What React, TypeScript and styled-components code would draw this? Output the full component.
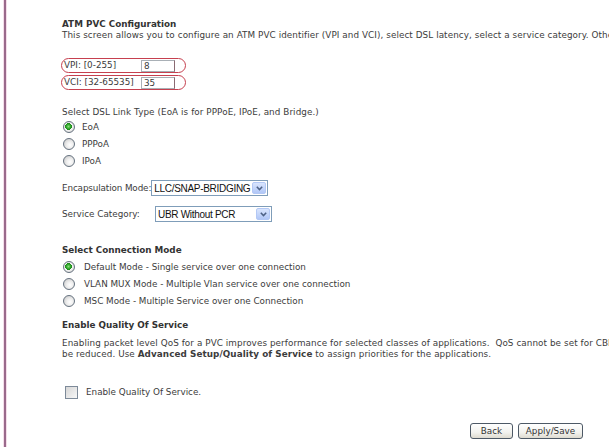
import styled, { createGlobalStyle } from "styled-components";

const GlobalStyle = createGlobalStyle`
  html, body {
    margin: 0;
    padding: 0;
    background: #fff;
    overflow: hidden;
  }
  body {
    font-family: "DejaVu Sans", Verdana, sans-serif;
    font-size: 8.8px;
    color: #3c3c3c;
  }
`;

const Page = styled.div`
  display: flex;
  width: 609px;
  height: 447px;
  overflow: hidden;
`;

const FrameEdge = styled.div`
  flex: none;
  margin-left: 3px;
  width: 4px;
  background: linear-gradient(
    to right,
    #f4dde9 0 1px,
    #9a6a8c 1px 3px,
    #f4dde9 3px
  );
`;

const Content = styled.div`
  padding: 19px 0 0 55px;
  white-space: nowrap;
  line-height: 11px;
`;

const Title = styled.div<{ $top?: number }>`
  font-weight: bold;
  color: #333;
  margin-top: ${(p) => p.$top ?? 0}px;
`;

const Text = styled.div<{ $top?: number }>`
  margin-top: ${(p) => p.$top ?? 0}px;
  letter-spacing: 0.08px;
`;

const FieldOval = styled.div<{ $top?: number }>`
  display: flex;
  align-items: center;
  width: 123px;
  height: 13px;
  margin-top: ${(p) => p.$top ?? 0}px;
  margin-left: -1px;
  border: 1px solid #c6404f;
  border-radius: 8px;
`;

const FieldLabel = styled.span`
  width: 77px;
  padding-left: 2px;
`;

const TextInput = styled.span`
  box-sizing: border-box;
  width: 34px;
  height: 12px;
  padding-left: 2px;
  border: 1px solid #a9b0b6;
  border-right-color: #8a6a72;
  line-height: 10px;
`;

const RadioList = styled.div<{ $top?: number; $gap: number }>`
  display: flex;
  flex-direction: column;
  margin-top: ${(p) => p.$top ?? 0}px;
  gap: ${(p) => p.$gap}px;
`;

const OptionRow = styled.div<{ $labelGap: number }>`
  display: flex;
  align-items: center;
  gap: ${(p) => p.$labelGap}px;
  padding-left: 1px;
`;

const Radio = styled.span<{ $checked?: boolean }>`
  box-sizing: border-box;
  width: 12px;
  height: 12px;
  border-radius: 50%;
  border: 1px solid #66727f;
  background: ${(p) =>
    p.$checked
      ? "radial-gradient(circle at 45% 45%, #8be07a 0, #2fa52a 2.2px, #1e8a1c 3.2px, #f4f4f4 3.6px, #dcdcdc 6px)"
      : "radial-gradient(circle at 60% 60%, #ffffff 0, #f0f0f0 3px, #d6d6d6 6px)"};
`;

const SelectRow = styled.div<{ $top?: number }>`
  display: flex;
  align-items: center;
  margin-top: ${(p) => p.$top ?? 0}px;
`;

const SelectLabel = styled.span<{ $width?: number; $squeeze?: boolean }>`
  width: ${(p) => (p.$width ? `${p.$width}px` : "auto")};
  letter-spacing: ${(p) => (p.$squeeze ? "-0.12px" : "normal")};
`;

const SelectBox = styled.div<{ $width: number }>`
  box-sizing: border-box;
  display: flex;
  align-items: center;
  justify-content: space-between;
  width: ${(p) => p.$width}px;
  height: 16px;
  padding: 0 1px 0 2px;
  border: 1px solid #7f9db9;
  background: #fff;
  font-family: "Liberation Sans", Arial, sans-serif;
  font-size: 10px;
  letter-spacing: -0.3px;
  color: #111;
`;

const ArrowButton = styled.span`
  box-sizing: border-box;
  display: flex;
  align-items: center;
  justify-content: center;
  width: 14px;
  height: 12px;
  border: 1px solid #b3c8f5;
  border-radius: 2px;
  background: linear-gradient(#d9e5fd, #b1c7f7);
`;

const CheckRow = styled.div<{ $top?: number }>`
  display: flex;
  align-items: center;
  gap: 8px;
  margin-top: ${(p) => p.$top ?? 0}px;
  padding-left: 3px;
`;

const CheckBox = styled.span`
  box-sizing: border-box;
  width: 13px;
  height: 13px;
  border: 1px solid #7d8a99;
  background: linear-gradient(135deg, #d6d6d6, #f7f7f7);
`;

const ButtonRow = styled.div<{ $top?: number }>`
  display: flex;
  gap: 5px;
  margin-top: ${(p) => p.$top ?? 0}px;
  padding-left: 408px;
`;

const Button = styled.button<{ $width: number }>`
  box-sizing: border-box;
  width: ${(p) => p.$width}px;
  height: 16px;
  padding: 0;
  border: 1px solid #4d5966;
  border-radius: 3px;
  background: linear-gradient(#ffffff, #f2f2ee 60%, #dedbd0);
  font-family: "DejaVu Sans", Verdana, sans-serif;
  font-size: 8.8px;
  color: #333;
`;

function Chevron() {
  return (
    <svg width="7" height="5" viewBox="0 0 7 5">
      <path d="M0.8 0.8 L3.5 3.6 L6.2 0.8" fill="none" stroke="#4d6185" strokeWidth="1.5" />
    </svg>
  );
}

const linkTypes = [
  { label: "EoA", checked: true },
  { label: "PPPoA", checked: false },
  { label: "IPoA", checked: false },
];

const connectionModes = [
  { label: "Default Mode - Single service over one connection", checked: true },
  { label: "VLAN MUX Mode - Multiple Vlan service over one connection", checked: false },
  { label: "MSC Mode - Multiple Service over one Connection", checked: false },
];

export default function App() {
  return (
    <>
      <GlobalStyle />
      <Page>
        <FrameEdge />
        <Content>
          <Title>ATM PVC Configuration</Title>
          <Text>
            This screen allows you to configure an ATM PVC identifier (VPI and VCI), select DSL
            latency, select a service category. Otherwise choose an existing interface by
            selecting the checkbox to enable it.
          </Text>

          <FieldOval $top={17}>
            <FieldLabel>VPI: [0-255]</FieldLabel>
            <TextInput>8</TextInput>
          </FieldOval>
          <FieldOval $top={2}>
            <FieldLabel>VCI: [32-65535]</FieldLabel>
            <TextInput>35</TextInput>
          </FieldOval>

          <Text $top={17}>Select DSL Link Type (EoA is for PPPoE, IPoE, and Bridge.)</Text>
          <RadioList $top={3} $gap={5}>
            {linkTypes.map((t) => (
              <OptionRow key={t.label} $labelGap={7}>
                <Radio $checked={t.checked} />
                <span>{t.label}</span>
              </OptionRow>
            ))}
          </RadioList>

          <SelectRow $top={13}>
            <SelectLabel $squeeze>Encapsulation Mode:</SelectLabel>
            <SelectBox $width={117}>
              <span>LLC/SNAP-BRIDGING</span>
              <ArrowButton>
                <Chevron />
              </ArrowButton>
            </SelectBox>
          </SelectRow>
          <SelectRow $top={10}>
            <SelectLabel $width={93}>Service Category:</SelectLabel>
            <SelectBox $width={117}>
              <span>UBR Without PCR</span>
              <ArrowButton>
                <Chevron />
              </ArrowButton>
            </SelectBox>
          </SelectRow>

          <Title $top={23}>Select Connection Mode</Title>
          <RadioList $top={5} $gap={5}>
            {connectionModes.map((m) => (
              <OptionRow key={m.label} $labelGap={9}>
                <Radio $checked={m.checked} />
                <span>{m.label}</span>
              </OptionRow>
            ))}
          </RadioList>

          <Title $top={13}>Enable Quality Of Service</Title>
          <Text $top={7}>
            Enabling packet level QoS for a PVC improves performance for selected classes of
            applications.&nbsp; QoS cannot be set for CBR and Realtime VBR.&nbsp; QoS consumes
            system resources; therefore the number of PVCs will
          </Text>
          <Text>
            be reduced. Use <b>Advanced Setup/Quality of Service</b> to assign priorities for the
            applications.
          </Text>

          <CheckRow $top={26}>
            <CheckBox />
            <span>Enable Quality Of Service.</span>
          </CheckRow>

          <ButtonRow $top={24}>
            <Button $width={43}>Back</Button>
            <Button $width={65}>Apply/Save</Button>
          </ButtonRow>
        </Content>
      </Page>
    </>
  );
}
